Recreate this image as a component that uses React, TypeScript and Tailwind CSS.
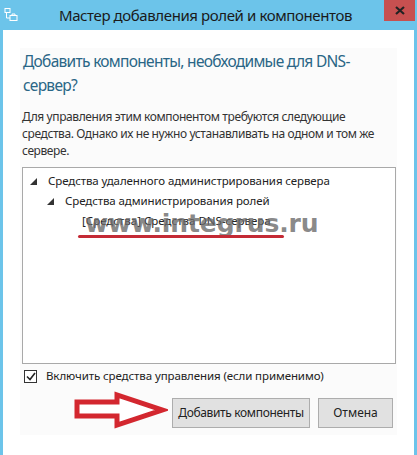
import React from 'react';

const font = { fontFamily: '"Noto Sans", "Open Sans", sans-serif' };

const TreeArrow = () => (
  <svg width="7" height="7" viewBox="0 0 7 7" className="shrink-0">
    <path d="M7 0 L7 7 L0 7 Z" fill="#333" />
  </svg>
);

export default function App() {
  return (
    <div className="w-[417px] h-[455px] bg-[#6cc4ea] flex flex-col overflow-hidden" style={font}>
      {/* title bar */}
      <div className="relative h-[30px] flex items-center shrink-0">
        <svg width="14" height="14" viewBox="0 0 14 14" className="ml-[4px]">
          <rect x="1" y="0.5" width="5" height="4" fill="none" stroke="#fff" />
          <path d="M2.5 4.5 V10 H6" fill="none" stroke="#fff" />
          <rect x="6" y="7.5" width="7" height="5" fill="none" stroke="#fff" />
          <path d="M8 7.5 V6 H11 V7.5" fill="none" stroke="#fff" />
        </svg>
        <div className="flex-1 text-center text-[15px] text-[#1a1a1a] pr-[24px] tracking-[-0.4px]">
          Мастер добавления ролей и компонентов
        </div>
        <div className="absolute top-0 right-[2px] w-[31px] h-[21px] bg-[#c75050] flex items-center justify-center">
          <svg width="10" height="9" viewBox="0 0 10 9">
            <path d="M1 1 L9 8 M9 1 L1 8" stroke="#222" strokeWidth="2.2" />
          </svg>
        </div>
      </div>

      {/* content */}
      <div className="flex-1 mx-[3px] mb-[3px] bg-white flex flex-col">
        <div className="mx-[17px] mt-[18px] mb-[20px] bg-[#fbfbfb] flex-1 flex flex-col pl-[2px] pr-[1px]">
          <h1 className="text-[15.5px] leading-[24px] text-[#2a6686] pl-[1px] pt-[1px] tracking-[-0.7px] whitespace-nowrap">
            Добавить компоненты, необходимые для DNS-
            <br />
            сервер?
          </h1>
          <p className="mt-[11px] text-[12px] leading-[17px] text-[#333] tracking-[-0.4px] whitespace-nowrap">
            Для управления этим компонентом требуются следующие
            <br />
            средства. Однако их не нужно устанавливать на одном и том же
            <br />
            сервере.
          </p>

          {/* tree */}
          <div className="relative mt-[8px] h-[197px] border border-[#a9a9a9] bg-white text-[11.5px] text-[#222] tracking-[-0.1px]">
            <div className="flex items-center gap-[11px] pl-[7px] pt-[3px] h-[23px]">
              <TreeArrow />
              <span>Средства удаленного администрирования сервера</span>
            </div>
            <div className="flex items-center gap-[11px] pl-[24px] h-[20px]">
              <TreeArrow />
              <span>Средства администрирования ролей</span>
            </div>
            <div className="flex items-center pl-[59px] h-[20px] tracking-normal">
              <span>[Средства] Средства DNS-сервера</span>
            </div>

            {/* watermark */}
            <div
              className="absolute left-[62px] top-[43px] text-[25px] font-bold text-[#6a6a6a]/80 leading-none whitespace-nowrap"
              style={{ fontFamily: '"DejaVu Sans", sans-serif' }}
            >
              www.integrus.ru
            </div>
            <div className="absolute left-[55px] top-[67px] w-[206px] h-[3px] bg-[#c42a35] rounded-full" />
          </div>

          {/* checkbox */}
          <div className="flex items-center gap-[9px] mt-[3px] pl-[2px] h-[18px]">
            <div className="w-[13px] h-[13px] border border-[#333] bg-white flex items-center justify-center">
              <svg width="10" height="9" viewBox="0 0 10 9">
                <path d="M1 4.5 L4 7.5 L9 1" fill="none" stroke="#222" strokeWidth="1.6" />
              </svg>
            </div>
            <span className="text-[11.5px] text-[#222] tracking-[-0.1px]">Включить средства управления (если применимо)</span>
          </div>

          {/* buttons */}
          <div className="flex items-center mt-[6px]">
            <svg width="94" height="44" viewBox="0 0 94 44" className="ml-[52px] mr-[4px]">
              <path
                d="M3 11 H43 V4 L88 19 L43 34 V25 H3 Z"
                fill="#fff"
                stroke="#d3272f"
                strokeWidth="5"
                strokeLinejoin="miter"
              />
            </svg>
            <div className="w-[138px] h-[30px] bg-[#e1e1e1] border border-[#adadad] flex items-center justify-center text-[12px] text-[#222] tracking-[-0.35px]">
              Добавить компоненты
            </div>
            <div className="ml-[8px] w-[75px] h-[30px] bg-[#e1e1e1] border border-[#adadad] flex items-center justify-center text-[12px] text-[#222]">
              Отмена
            </div>
          </div>
        </div>
      </div>
    </div>
  );
}
